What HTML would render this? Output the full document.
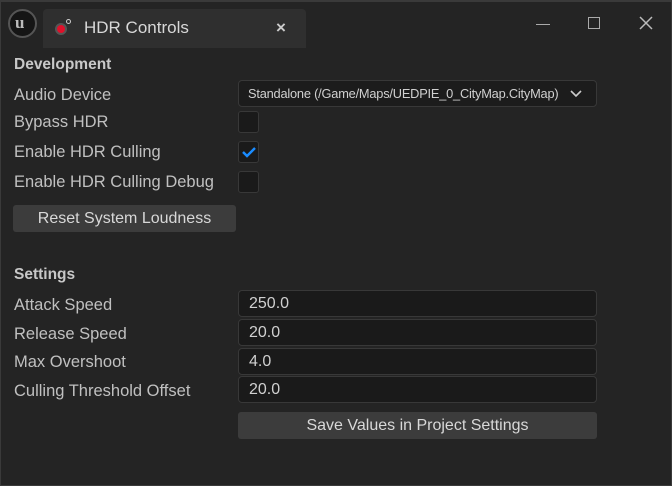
<!DOCTYPE html>
<html><head><style>
*{margin:0;padding:0;box-sizing:border-box}
body{width:672px;height:486px;background:#242424;font-family:"Liberation Sans",sans-serif;color:#c0c0c0;position:relative;overflow:hidden}
.frame{position:absolute;left:0;top:0;width:672px;height:486px;border:1px solid #3a3a3a;border-top:2px solid #3a3a3a}
.a{position:absolute}
.lbl{position:absolute;left:14px;font-size:16.5px;color:#c0c0c0;line-height:20px;white-space:nowrap}
.h{font-weight:bold;font-size:15.5px;color:#c8c8c8}
.fld{position:absolute;left:238px;width:359px;height:27px;background:#1a1a1a;border:1px solid #383838;border-radius:4px;font-size:16px;color:#d0d0d0;padding-left:10px;line-height:26px}
.cb{position:absolute;left:238px;width:21px;height:22px;background:#1a1a1a;border:1px solid #383838;border-radius:3px}
.btn{position:absolute;background:#3c3c3c;border-radius:3px;font-size:16px;color:#d8d8d8;text-align:center}
</style></head><body>
<div class="frame"></div>
<div class="a" style="left:8px;top:9px;width:29px;height:29px;border-radius:50%;background:#151515;border:2px solid #555"></div>
<div class="a" style="left:15px;top:13px;font-size:17px;font-weight:bold;color:#bbb;font-family:'Liberation Serif',serif">u</div>
<div class="a" style="left:43px;top:9px;width:263px;height:39px;background:#2f2f2f;border-radius:4px 4px 0 0"></div>
<div class="a" style="left:55px;top:23px;width:12px;height:12px;border-radius:50%;background:#e0102a;border:2px solid #555"></div>
<div class="a" style="left:66px;top:19px;width:5px;height:5px;border-radius:50%;border:1px solid #ccc"></div>
<div class="a" style="left:84px;top:18px;font-size:17px;color:#d8d8d8">HDR Controls</div>
<div class="a" style="left:276px;top:18px;font-size:17px;color:#ccc;font-weight:bold">×</div>
<div class="a" style="left:536px;top:24px;width:14px;height:1px;background:#aaa"></div>
<div class="a" style="left:588px;top:17px;width:12px;height:12px;border:1.5px solid #aaa"></div>
<svg class="a" style="left:639px;top:16px" width="14" height="14"><path d="M1 1L13 13M13 1L1 13" stroke="#bbb" stroke-width="1.5"/></svg>

<div class="lbl h" style="top:55px">Development</div>
<div class="lbl" style="top:85px">Audio Device</div>
<div class="lbl" style="top:112px">Bypass HDR</div>
<div class="lbl" style="top:142px">Enable HDR Culling</div>
<div class="lbl" style="top:172px">Enable HDR Culling Debug</div>
<div class="fld" style="top:80px;height:27px;font-size:12.8px;letter-spacing:-0.2px;line-height:25px;background:#1c1c1c;padding-left:9px">Standalone (/Game/Maps/UEDPIE_0_CityMap.CityMap)
<svg style="position:absolute;right:14px;top:9px" width="12" height="8"><path d="M1 1L6 6L11 1" stroke="#ccc" stroke-width="1.6" fill="none"/></svg></div>
<div class="cb" style="top:111px"></div>
<div class="cb" style="top:141px"><svg style="position:absolute;left:2px;top:4px" width="16" height="12"><path d="M2 6L6 10L14 2" stroke="#1a8cff" stroke-width="2.4" fill="none"/></svg></div>
<div class="cb" style="top:171px"></div>
<div class="btn" style="left:13px;top:205px;width:223px;height:27px;line-height:27px">Reset System Loudness</div>

<div class="lbl h" style="top:265px">Settings</div>
<div class="lbl" style="top:295px">Attack Speed</div>
<div class="lbl" style="top:324px">Release Speed</div>
<div class="lbl" style="top:352px">Max Overshoot</div>
<div class="lbl" style="top:381px">Culling Threshold Offset</div>
<div class="fld" style="top:290px">250.0</div>
<div class="fld" style="top:319px">20.0</div>
<div class="fld" style="top:348px">4.0</div>
<div class="fld" style="top:376px">20.0</div>
<div class="btn" style="left:238px;top:412px;width:359px;height:27px;line-height:27px">Save Values in Project Settings</div>
</body></html>
